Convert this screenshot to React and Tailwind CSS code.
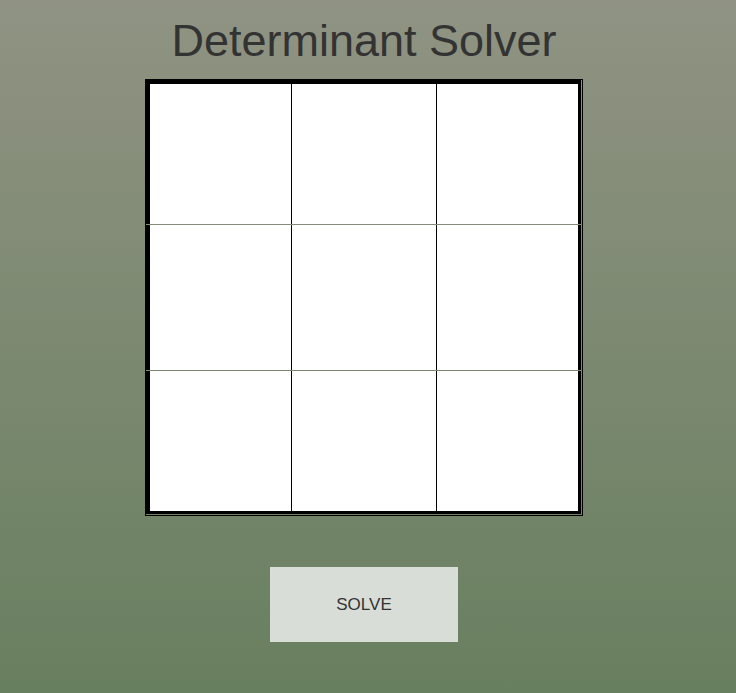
export default function App() {
  const rows = [
    { h: "h-[140px]", cls: "border-t-4" },
    { h: "h-[145px]", cls: "" },
    { h: "h-[140px]", cls: "border-b-[3px]" },
  ];
  return (
    <div className="min-h-[693px] w-full bg-gradient-to-b from-[#909383] to-[#687f5f] font-['Liberation_Sans',Arial,sans-serif]">
      <div className="w-[728px] flex flex-col items-center">
        <h1 className="mt-[18px] text-[45px] leading-none text-[#333]">Determinant Solver</h1>

        {/* matrix */}
        <div className="mt-[16px] w-[438px] border border-black">
          <div className="flex flex-col gap-px mr-px mb-px">
            {rows.map((r, i) => (
              <div key={i} className={`flex border-l-4 border-r-[3px] border-black ${r.cls}`}>
                <div className="flex w-full divide-x divide-black bg-white">
                  <input className={`w-[142px] ${r.h} bg-white outline-none`} />
                  <input className={`w-[145px] ${r.h} bg-white outline-none`} />
                  <input className={`flex-1 min-w-0 ${r.h} bg-white outline-none`} />
                </div>
              </div>
            ))}
          </div>
        </div>

        <button className="mt-[51px] w-[188px] h-[75px] bg-[#d8ddd8] text-[17px] text-[#333]">
          SOLVE
        </button>
      </div>
    </div>
  );
}
